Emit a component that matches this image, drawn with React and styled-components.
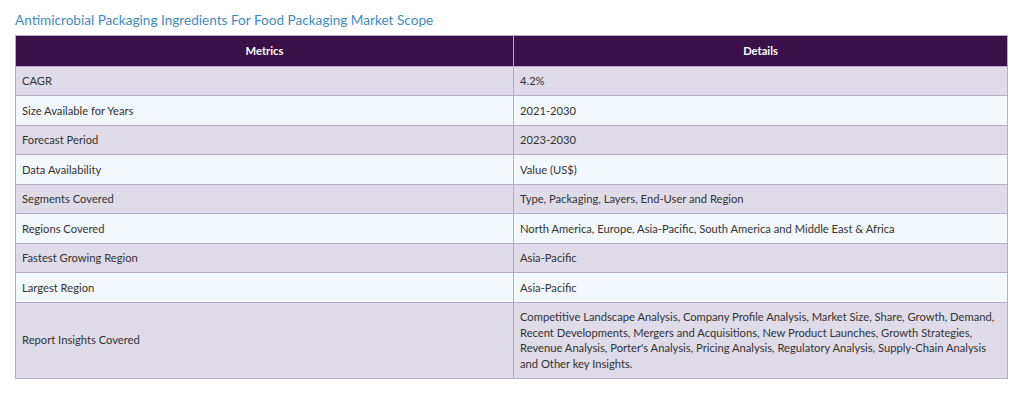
import styled, { createGlobalStyle } from "styled-components";

const GlobalStyle = createGlobalStyle`
  body {
    margin: 0;
    background: #ffffff;
    font-family: Lato, "Open Sans", sans-serif;
  }
`;

const Wrapper = styled.section`
  padding: 11px 16px 0 15px;
`;

const Title = styled.h2`
  margin: 0 0 6px;
  font-size: 13.6px;
  font-weight: 400;
  line-height: 18px;
  color: #3f8bbf;
`;

const Table = styled.table`
  width: 993px;
  border-collapse: collapse;
  table-layout: fixed;
  font-size: 11.2px;
  line-height: 15.5px;
  color: #333;
`;

const HeadCell = styled.th`
  background: #3a1049;
  color: #ffffff;
  font-weight: 700;
  text-align: center;
  padding: 7px;
  border: 1px solid #b7abcb;
`;

const Row = styled.tr`
  background: ${(p) => (p.$odd ? "#dfdbe9" : "#f3f8fc")};
`;

const Cell = styled.td`
  padding: 6.5px 8px 6.5px 6px;
  border: 1px solid #b7abcb;
  vertical-align: middle;
`;

const rows = [
  ["CAGR", "4.2%"],
  ["Size Available for Years", "2021-2030"],
  ["Forecast Period", "2023-2030"],
  ["Data Availability", "Value (US$)"],
  ["Segments Covered", "Type, Packaging, Layers, End-User and Region"],
  [
    "Regions Covered",
    "North America, Europe, Asia-Pacific, South America and Middle East & Africa",
  ],
  ["Fastest Growing Region", "Asia-Pacific"],
  ["Largest Region", "Asia-Pacific"],
  [
    "Report Insights Covered",
    "Competitive Landscape Analysis, Company Profile Analysis, Market Size, Share, Growth, Demand, Recent Developments, Mergers and Acquisitions, New Product Launches, Growth Strategies, Revenue Analysis, Porter's Analysis, Pricing Analysis, Regulatory Analysis, Supply-Chain Analysis and Other key Insights.",
  ],
];

const App = () => {
  return (
    <>
      <GlobalStyle />
      <Wrapper>
        <Title>Antimicrobial Packaging Ingredients For Food Packaging Market Scope</Title>
        <Table>
          <colgroup>
            <col style={{ width: "498px" }} />
            <col />
          </colgroup>
          <thead>
            <tr>
              <HeadCell>Metrics</HeadCell>
              <HeadCell>Details</HeadCell>
            </tr>
          </thead>
          <tbody>
            {rows.map(([metric, detail], i) => (
              <Row key={metric} $odd={i % 2 === 0}>
                <Cell>{metric}</Cell>
                <Cell>{detail}</Cell>
              </Row>
            ))}
          </tbody>
        </Table>
      </Wrapper>
    </>
  );
};

export default App;
